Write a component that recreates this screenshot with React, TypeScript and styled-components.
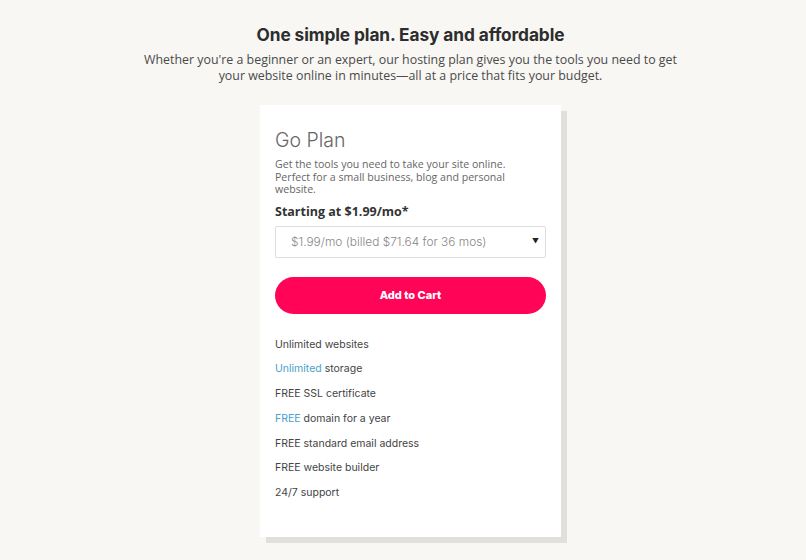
import React from "react";
import styled, { createGlobalStyle } from "styled-components";

const Global = createGlobalStyle`
  html, body { margin: 0; padding: 0; background: #f8f7f4; }
  body { font-family: "Open Sans", sans-serif; }
`;

const Page = styled.div`
  width: 806px;
  height: 560px;
  display: flex;
  flex-direction: column;
  align-items: center;
  padding: 24px 0 0 15px;
  box-sizing: border-box;
`;

const Title = styled.h1`
  margin: 0;
  font-family: Inter, "Noto Sans", sans-serif;
  font-size: 17.3px;
  font-weight: 700;
  color: #2d2d2d;
  line-height: 22px;
  letter-spacing: -0.1px;
`;

const Subtitle = styled.p`
  margin: 6px 0 0;
  width: 560px;
  text-align: center;
  font-family: "Open Sans", sans-serif;
  font-size: 12.4px;
  line-height: 16px;
  color: #4a4a4a;
`;

const Card = styled.div`
  margin-top: 21px;
  width: 301px;
  height: 432px;
  background: #fff;
  box-shadow: 6px 6px 0 #e0dfdb;
  padding: 23px 15px 0;
  box-sizing: border-box;
  display: flex;
  flex-direction: column;
`;

const PlanName = styled.h2`
  margin: 0;
  font-family: Inter, "Noto Sans", sans-serif;
  font-weight: 300;
  font-size: 19.5px;
  line-height: 24px;
  color: #666;
`;

const Desc = styled.p`
  margin: 6px 0 0;
  font-family: "Open Sans", sans-serif;
  font-size: 10.6px;
  line-height: 12.5px;
  color: #666;
`;

const Starting = styled.div`
  margin-top: 8px;
  font-family: "Open Sans", sans-serif;
  font-weight: 700;
  font-size: 12.5px;
  line-height: 16px;
  color: #333;
`;

const Select = styled.div`
  margin-top: 6px;
  height: 32px;
  border: 1px solid #ddd;
  border-radius: 2px;
  display: flex;
  align-items: center;
  justify-content: space-between;
  padding: 0 6px 0 15px;
  box-sizing: border-box;
  font-family: Inter, "Noto Sans", sans-serif;
  font-weight: 300;
  font-size: 11.9px;
  color: #888;
`;

const Caret = styled.span`
  font-size: 7px;
  color: #222;
`;

const CartButton = styled.button`
  margin-top: 19px;
  height: 37px;
  border: none;
  border-radius: 19px;
  background: #ff0457;
  color: #fff;
  font-family: Inter, "Noto Sans", sans-serif;
  font-weight: 800;
  font-size: 11px;
  cursor: pointer;
`;

const Features = styled.ul`
  list-style: none;
  margin: 24px 0 0;
  padding: 0;
  display: flex;
  flex-direction: column;
  gap: 10.8px;
`;

const Feature = styled.li`
  font-family: Inter, "Noto Sans", sans-serif;
  font-size: 10.5px;
  line-height: 14px;
  color: #444;
`;

const Accent = styled.span`
  color: #4aa0c9;
`;

export default function App() {
  return (
    <>
      <Global />
      <Page>
        <Title>One simple plan. Easy and affordable</Title>
        <Subtitle>
          Whether you're a beginner or an expert, our hosting plan gives you the tools you need to get
          your website online in minutes—all at a price that fits your budget.
        </Subtitle>
        <Card>
          <PlanName>Go Plan</PlanName>
          <Desc>
            Get the tools you need to take your site online.
            <br />
            Perfect for a small business, blog and personal
            <br />
            website.
          </Desc>
          <Starting>Starting at $1.99/mo*</Starting>
          <Select>
            <span>$1.99/mo (billed $71.64 for 36 mos)</span>
            <Caret>▼</Caret>
          </Select>
          <CartButton>Add to Cart</CartButton>
          <Features>
            <Feature>Unlimited websites</Feature>
            <Feature>
              <Accent>Unlimited</Accent> storage
            </Feature>
            <Feature>FREE SSL certificate</Feature>
            <Feature>
              <Accent>FREE</Accent> domain for a year
            </Feature>
            <Feature>FREE standard email address</Feature>
            <Feature>FREE website builder</Feature>
            <Feature>24/7 support</Feature>
          </Features>
        </Card>
      </Page>
    </>
  );
}
